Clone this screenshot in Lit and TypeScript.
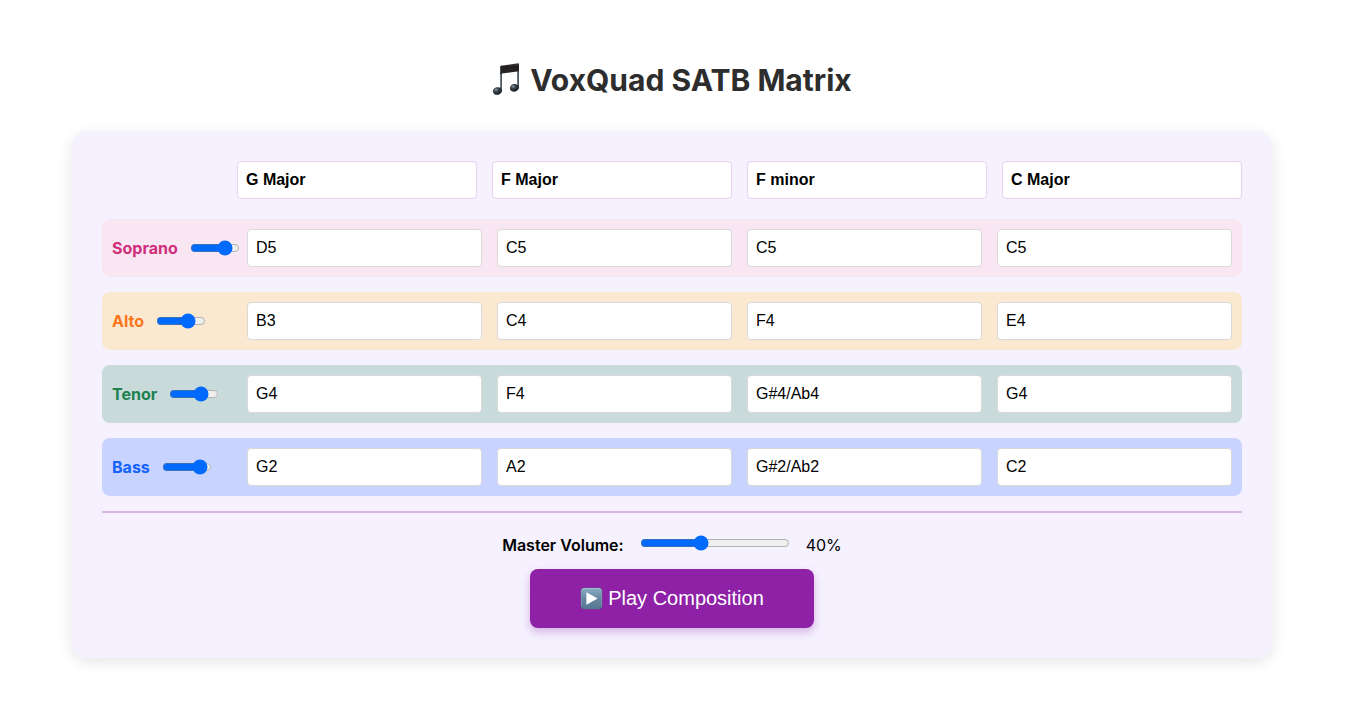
import { LitElement, html, css } from "lit";
import { customElement, state } from "lit/decorators.js";

interface Voice {
  id: string;
  name: string;
  volume: number;
  notes: string[];
}

@customElement("app-root")
export class AppRoot extends LitElement {
  static styles = css`
    :host {
      display: block;
      box-sizing: border-box;
      padding: 56px 100px 56px 72px;
      font-family: Inter, "Liberation Sans", sans-serif;
      font-size: 16px;
      line-height: 24px;
      color: #000;
    }
    * {
      box-sizing: border-box;
    }
    .page {
      max-width: 1200px;
      margin: 0 auto;
    }
    .title {
      display: flex;
      align-items: center;
      justify-content: center;
      gap: 9px;
      margin: 0 0 27px;
      font-size: 30px;
      line-height: 48px;
      font-weight: 700;
      color: #2d2d2d;
    }
    .note-icon {
      width: 29px;
      height: 34px;
    }
    .card {
      padding: 30px;
      border-radius: 15px;
      background: #f5f1ff;
      box-shadow: 0 4px 15px rgba(0, 0, 0, 0.1);
    }
    .chords,
    .voice {
      display: grid;
      grid-template-columns: 120px repeat(4, minmax(0, 1fr));
      column-gap: 15px;
      align-items: center;
    }
    .chords {
      margin-bottom: 20px;
    }
    .voice {
      padding: 10px;
      margin-bottom: 15px;
      border-radius: 8px;
    }
    .soprano { background: #f8e6f2; color: #d02e7c; }
    .alto { background: #fae8d0; color: #fd7519; }
    .tenor { background: #c9dada; color: #1c8150; }
    .bass { background: #c8d4ff; color: #1463fd; }
    .field {
      width: 100%;
      height: 38px;
      padding: 8px;
      border: 1px solid #d9d9d9;
      border-radius: 4px;
      background: #fff;
      color: #000;
      font: 16px "Liberation Sans", Arial, sans-serif;
    }
    .chord {
      grid-column: auto;
      border-color: #e6d2ec;
      font-weight: 700;
    }
    .chord:first-child {
      grid-column: 2;
    }
    .part {
      display: flex;
      align-items: center;
      gap: 12px;
      font-weight: 700;
    }
    .slider {
      flex: none;
      height: 16px;
      margin: 0;
      accent-color: #006aff;
    }
    .small {
      width: 50px;
    }
    .wide {
      width: 150px;
      height: 20px;
    }
    .controls {
      display: flex;
      flex-direction: column;
      align-items: center;
      padding-top: 20px;
      border-top: 2px solid #dbb2e4;
    }
    .master {
      display: flex;
      gap: 16px;
      margin-bottom: 12px;
    }
    .master-label {
      font-weight: 600;
    }
    .play {
      display: flex;
      align-items: center;
      gap: 5px;
      padding: 18px 50px;
      border: 0;
      border-radius: 8px;
      background: #8e21a5;
      box-shadow: 0 4px 8px rgba(142, 33, 165, 0.3);
      color: #fff;
      font: 20px/23px "Liberation Sans", Arial, sans-serif;
      cursor: pointer;
    }
    .play-icon {
      width: 23px;
      height: 23px;
    }
  `;

  @state() private master = 40;

  private chords = ["G Major", "F Major", "F minor", "C Major"];

  private voices: Voice[] = [
    { id: "soprano", name: "Soprano", volume: 80, notes: ["D5", "C5", "C5", "C5"] },
    { id: "alto", name: "Alto", volume: 70, notes: ["B3", "C4", "F4", "E4"] },
    { id: "tenor", name: "Tenor", volume: 70, notes: ["G4", "F4", "G#4/Ab4", "G4"] },
    { id: "bass", name: "Bass", volume: 90, notes: ["G2", "A2", "G#2/Ab2", "C2"] },
  ];

  private setMaster(e: Event) {
    this.master = Number((e.target as HTMLInputElement).value);
  }

  render() {
    return html`
      <main class="page">
        <h1 class="title">
          <svg class="note-icon" viewBox="0 0 29 34" aria-hidden="true">
            <defs>
              <linearGradient id="beam" x1="0" y1="0" x2="0" y2="1">
                <stop offset="0" stop-color="#3d464b" />
                <stop offset="0.3" stop-color="#211b1c" />
                <stop offset="1" stop-color="#2c292b" />
              </linearGradient>
              <radialGradient id="head" cx="0.4" cy="0.3" r="0.7">
                <stop offset="0" stop-color="#8b9ba5" />
                <stop offset="0.35" stop-color="#3b4750" />
                <stop offset="1" stop-color="#11171b" />
              </radialGradient>
            </defs>
            <path d="M9.1 9.5V27.5M26.1 7V24.5" fill="none" stroke="#4d5a62" stroke-width="1.8" />
            <path d="M8.2 3.6Q8.2 3 8.9 2.8L26.3 0.3Q27 0.2 27 0.9V8.2L9.9 10.6V11.2H8.2Z" fill="url(#beam)" />
            <ellipse cx="5.4" cy="28" rx="4.6" ry="3.8" transform="rotate(-14 5.4 28)" fill="url(#head)" />
            <ellipse cx="22.4" cy="24.8" rx="4.6" ry="3.8" transform="rotate(-14 22.4 24.8)" fill="url(#head)" />
          </svg>
          <span>VoxQuad SATB Matrix</span>
        </h1>
        <section class="card">
          <div class="chords">
            ${this.chords.map(
              (c, i) => html`<input class="field chord" type="text" aria-label="Chord ${i + 1}" .value=${c} />`
            )}
          </div>
          ${this.voices.map(
            (v) => html`
              <div class="voice ${v.id}">
                <div class="part">
                  <label for="${v.id}-volume">${v.name}</label>
                  <input id="${v.id}-volume" class="slider small" type="range" min="0" max="100" .value=${String(v.volume)} />
                </div>
                ${v.notes.map(
                  (n, i) => html`<input class="field" type="text" aria-label="${v.name} note ${i + 1}" .value=${n} />`
                )}
              </div>
            `
          )}
          <div class="controls">
            <div class="master">
              <label class="master-label" for="master-volume">Master Volume:</label>
              <input
                id="master-volume"
                class="slider wide"
                type="range"
                min="0"
                max="100"
                .value=${String(this.master)}
                @input=${this.setMaster}
              />
              <output for="master-volume">${this.master}%</output>
            </div>
            <button class="play" type="button">
              <svg class="play-icon" viewBox="0 0 23 23" aria-hidden="true">
                <defs>
                  <linearGradient id="tile" x1="0" y1="0" x2="0" y2="1">
                    <stop offset="0" stop-color="#86a9c0" />
                    <stop offset="0.5" stop-color="#6888a2" />
                    <stop offset="1" stop-color="#557792" />
                  </linearGradient>
                </defs>
                <rect x="0.7" y="0.7" width="21.6" height="21.6" rx="3.6" fill="#48667f" />
                <rect x="1.3" y="1.1" width="20.4" height="20.2" rx="3.2" fill="#a1bfd0" />
                <rect x="1.5" y="1.9" width="20" height="19.6" rx="3" fill="url(#tile)" />
                <path d="M6.4 5.3V17.7L17.6 11.5Z" fill="#fff" />
              </svg>
              <span>Play Composition</span>
            </button>
          </div>
        </section>
      </main>
    `;
  }
}
